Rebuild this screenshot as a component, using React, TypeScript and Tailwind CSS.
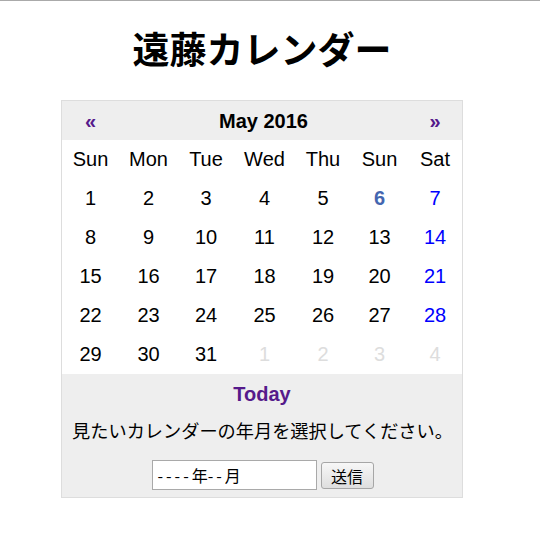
import React from "react";

const days = ["Sun", "Mon", "Tue", "Wed", "Thu", "Sun", "Sat"];

type Cell = { n: number; cls: string };

const rows: Cell[][] = [];
{
  let d = 1;
  for (let r = 0; r < 5; r++) {
    const row: Cell[] = [];
    for (let c = 0; c < 7; c++) {
      if (d <= 31) {
        let cls = "text-black";
        if (d === 6) cls = "text-[#4466b0] font-bold";
        else if (c === 6) cls = "text-[#0000ff]";
        row.push({ n: d, cls });
      } else {
        row.push({ n: d - 31, cls: "text-[#dddddd]" });
      }
      d++;
    }
    rows.push(row);
  }
}

const cols = "grid grid-cols-[57px_59px_56px_61px_56px_57px_54px] items-center text-[20px]";

export default function App() {
  return (
    <div className="w-[540px] h-[537px] bg-white border-t border-[#aaaaaa] font-['Liberation_Sans','Noto_Sans_CJK_JP',sans-serif] text-black">
      <div className="ml-[61px] w-[402px]">
        <div className="h-[99px] flex items-center justify-center pt-[1px]">
          <h1 className="text-[37px] leading-none font-bold">遠藤カレンダー</h1>
        </div>
        <div className="border border-[#dddddd]">
          <div className={"h-[39px] bg-[#eeeeee] font-bold " + cols}>
            <div className="text-center text-[#551a8b]">«</div>
            <div className="col-span-5 text-center">May 2016</div>
            <div className="text-center text-[#551a8b]">»</div>
          </div>
          <div className={"h-[38px] " + cols}>
            {days.map((d, i) => (
              <div key={i} className="text-center">{d}</div>
            ))}
          </div>
          {rows.map((row, ri) => (
            <div key={ri} className={(ri === 4 ? "h-[40px] pb-[1px] " : "h-[39px] ") + cols}>
              {row.map((c, ci) => (
                <div key={ci} className={"text-center " + c.cls}>{c.n}</div>
              ))}
            </div>
          ))}
          <div className="bg-[#eeeeee]">
            <div className="h-[39px] flex items-center justify-center text-[20px] font-bold text-[#551a8b] pt-[1px]">Today</div>
            <div className="h-[38px] flex items-center justify-center text-[18.2px] pt-[1px] pl-[1px]">見たいカレンダーの年月を選択してください。</div>
            <div className="h-[46px] flex items-start justify-center gap-[4px] pt-[9px] pl-[1px]">
              <div className="w-[165px] h-[30px] border border-[#a9a9a9] bg-white flex items-center pl-[5px] text-[16px] font-['Noto_Sans_CJK_JP',sans-serif]">
                <span className="tracking-[3px]">----</span>
                <span>年</span>
                <span className="tracking-[3px]">--</span>
                <span>月</span>
              </div>
              <div className="mt-[2px] w-[53px] h-[27px] border border-[#a6a6a6] rounded-[3px] bg-gradient-to-b from-[#f7f7f7] to-[#dedede] flex items-center justify-center text-[16px] font-['Noto_Sans_CJK_JP',sans-serif]">
                送信
              </div>
            </div>
          </div>
        </div>
      </div>
    </div>
  );
}
